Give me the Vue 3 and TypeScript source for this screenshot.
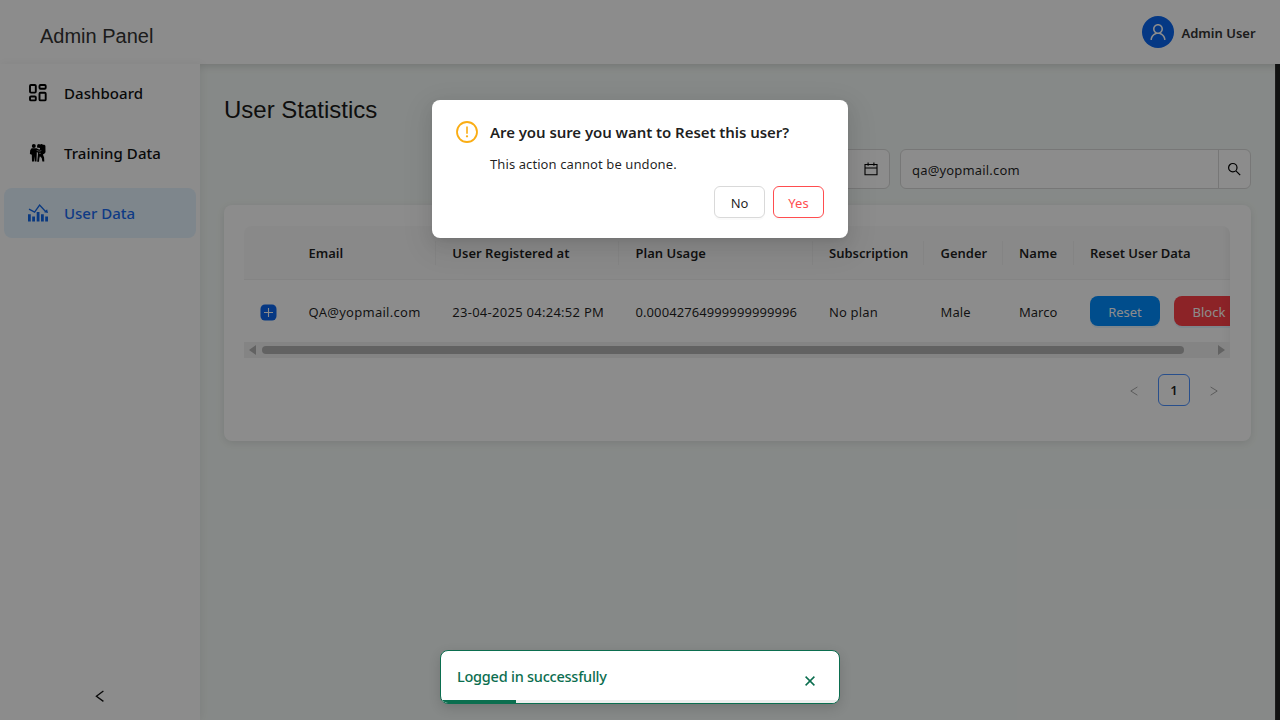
<script setup lang="ts">
interface MenuItem { key: string; label: string }
interface Column { key: string; title: string }

const menu: MenuItem[] = [
  { key: 'dashboard', label: 'Dashboard' },
  { key: 'training', label: 'Training Data' },
  { key: 'users', label: 'User Data' },
]
const activeKey = 'users'

const columns: Column[] = [
  { key: 'email', title: 'Email' },
  { key: 'registered', title: 'User Registered at' },
  { key: 'usage', title: 'Plan Usage' },
  { key: 'plan', title: 'Subscription' },
  { key: 'gender', title: 'Gender' },
  { key: 'name', title: 'Name' },
]
const row: Record<string, string> = {
  email: 'QA@yopmail.com',
  registered: '23-04-2025 04:24:52 PM',
  usage: '0.00042764999999999996',
  plan: 'No plan',
  gender: 'Male',
  name: 'Marco',
}
</script>

<template>
  <div class="app">
    <header class="header">
      <div class="brand">Admin Panel</div>
      <div class="account">
        <span class="avatar">
          <svg viewBox="64 64 896 896" width="18" height="18" fill="currentColor"><path d="M858.5 763.6a374 374 0 00-80.6-119.5 375.63 375.63 0 00-119.5-80.6c-.4-.2-.8-.3-1.2-.5C719.5 518 760 444.7 760 362c0-137-111-248-248-248S264 225 264 362c0 82.7 40.5 156 102.8 201.1-.4.2-.8.3-1.2.5-44.8 18.9-85 46-119.5 80.6a375.63 375.63 0 00-80.6 119.5A371.7 371.7 0 00136 901.8a8 8 0 008 8.2h60c4.4 0 7.9-3.5 8-7.8 2-77.2 33-149.5 87.8-204.3 56.7-56.7 132-87.9 212.2-87.9s155.5 31.2 212.2 87.9C779 752.7 810 825 812 902.2c.1 4.4 3.6 7.8 8 7.8h60a8 8 0 008-8.2c-1-47.8-10.9-94.3-29.5-138.2zM512 534c-45.9 0-89.1-17.9-121.6-50.4S340 407.9 340 362c0-45.9 17.9-89.1 50.4-121.6S466.1 190 512 190s89.1 17.9 121.6 50.4S684 316.1 684 362c0 45.9-17.9 89.1-50.4 121.6S557.9 534 512 534z" /></svg>
        </span>
        <span class="account-name">Admin User</span>
      </div>
    </header>

    <div class="body">
      <aside class="sider">
        <nav class="menu">
          <a v-for="item in menu" :key="item.key" class="menu-item" :class="[{ active: item.key === activeKey }, item.key]">
            <svg v-if="item.key === 'dashboard'" class="menu-icon" viewBox="0 0 20 20" fill="none" stroke="currentColor" stroke-width="1.9">
              <rect x="2" y="2" width="5.8" height="7.6" rx="1" /><rect x="11.5" y="2" width="6.2" height="3.8" rx="1" />
              <rect x="2" y="13.5" width="5.8" height="3.9" rx="1" /><rect x="11.5" y="9.8" width="6.2" height="7.6" rx="1" />
            </svg>
            <svg v-else-if="item.key === 'training'" class="menu-icon" viewBox="0 0 20 20" fill="currentColor">
              <circle cx="5.8" cy="3.1" r="2" />
              <path d="M3.6 5.3h5l1.8 1 1.6.2V5L9 4.4l.3-2.6 1.5-.9 1.3.6 1.5-.5 1.5.8 1.3-.1 1 1 .1 6.5-1.2 1.5-1.4.9 1.2 3 .2 4h-1.9l-.7-3.5-1.8-1.9-.6 2.3-.3 3.2H9.2l.7-6.8.1-2.2-1.2-.8-.3 9.7H6.7l-.3-5.4-.5 5.4H4l-.2-6.8-1.9-.7.3-3.8z" />
              <path d="M8.6 7.4l2.6.8 2.1-.6M10.9 10.3h2" stroke="#aaa" stroke-width=".8" fill="none" />
            </svg>
            <svg v-else class="menu-icon" viewBox="0 0 20 20" fill="currentColor">
              <path d="M0 11.2h2.8v7.2H0zM4.2 13.6H7v4.8H4.2zM8.7 9h2.8v9.4H8.7zM13 11.2h2.8v7.2H13zM17.2 13.6H20v4.8h-2.8z" />
              <path d="M1 6.2l5.6 2.9 5-7 6.2 6.6" fill="none" stroke="currentColor" stroke-width="1.3" /><path d="M20 10l-3.9-.7 3-3z" />
            </svg>
            <span>{{ item.label }}</span>
          </a>
        </nav>
        <div class="trigger">
          <svg width="12" height="14" viewBox="0 0 12 14" fill="none" stroke="#111" stroke-width="1.3"><path d="M9.4 2.1L2.4 7.3l7 5.1" /></svg>
        </div>
      </aside>

      <main class="content">
        <h1 class="title">User Statistics</h1>
        <div class="filters">
          <div class="range">
            <svg width="14" height="14" viewBox="0 0 14 14" fill="none" stroke="#000" stroke-width="1.1"><path d="M1 2.5h12v10.3H1zM1 6h12M4.1.6v3.2M9.9.6v3.2" /></svg>
          </div>
          <div class="search">
            <div class="search-input">qa@yopmail.com</div>
            <div class="search-btn">
              <svg width="14" height="14" viewBox="0 0 14 14" fill="none" stroke="#000" stroke-width="1.2"><circle cx="5.8" cy="5.7" r="4.2" /><path d="M8.9 8.8l4.3 4.3" /></svg>
            </div>
          </div>
        </div>

        <section class="card">
          <div class="table">
            <div class="tr thead">
              <div class="td"></div>
              <div v-for="c in columns" :key="c.key" class="td th">{{ c.title }}</div>
              <div class="td th last">Reset User Data</div>
            </div>
            <div class="tr tbody">
              <div class="td expand">
                <svg width="17" height="17" viewBox="0 0 17 17"><rect x=".5" y=".5" width="16" height="16" rx="4.5" fill="#0b66ee" /><path d="M8.5 4v9M4 8.5h9" stroke="#fff" stroke-width="1.1" /></svg>
              </div>
              <div v-for="c in columns" :key="c.key" class="td" :class="c.key">{{ row[c.key] }}</div>
              <div class="td actions">
                <button class="act reset">Reset</button>
                <button class="act block">Block</button>
              </div>
            </div>
            <div class="scroll">
              <i class="arrow left"></i><i class="thumb"></i><i class="arrow right"></i>
            </div>
            <div class="ping"></div>
          </div>
          <div class="pager">
            <span class="page-nav"><svg width="10" height="12" viewBox="0 0 10 12" fill="none" stroke="#a8a8a8" stroke-width="1"><path d="M8.4 2L1.8 6l6.6 4.2" /></svg></span>
            <span class="page">1</span>
            <span class="page-nav"><svg width="10" height="12" viewBox="0 0 10 12" fill="none" stroke="#a8a8a8" stroke-width="1"><path d="M1.6 2l6.6 4-6.6 4.2" /></svg></span>
          </div>
        </section>
      </main>
      <div class="edge"></div>
    </div>

    <div class="mask"></div>

    <div class="modal">
      <svg class="warn" width="22" height="22" viewBox="0 0 22 22"><circle cx="11" cy="11" r="10" fill="none" stroke="#faad14" stroke-width="1.8" /><path d="M10.2 5.5h1.6v7.2h-1.6z" fill="#faad14" /><circle cx="11" cy="15.3" r="1.15" fill="#faad14" /></svg>
      <div class="modal-main">
        <div class="modal-title">Are you sure you want to Reset this user?</div>
        <div class="modal-text">This action cannot be undone.</div>
        <div class="modal-actions">
          <button class="btn">No</button>
          <button class="btn danger">Yes</button>
        </div>
      </div>
    </div>

    <div class="toast">
      <span class="toast-text">Logged in successfully</span>
      <svg class="toast-close" width="10" height="10" viewBox="0 0 10 10" fill="none" stroke="#0b6e4f" stroke-width="1.5"><path d="M.6.6l8.8 8.8M9.4.6L.6 9.4" /></svg>
      <div class="progress"><i></i></div>
    </div>
  </div>
</template>

<style>
html, body { margin: 0; overflow: hidden; }
</style>

<style scoped>
* { box-sizing: border-box; }
.app { position: relative; width: 1280px; height: 720px; overflow: hidden; display: flex; flex-direction: column; background: #fff; font-family: "Noto Sans", "Open Sans", sans-serif; font-size: 13px; color: rgba(0, 0, 0, .88); }
svg { display: block; flex: none; }
button { font: inherit; margin: 0; }
.header { height: 64px; flex: none; display: flex; align-items: center; justify-content: space-between; padding: 0 23.5px 0 40px; background: #fff; box-shadow: 0 2px 8px rgba(0, 0, 0, .15); position: relative; }
.brand { font: 20px/24px "Liberation Sans", Arial, sans-serif; color: #333; padding-top: 8px; }
.account { display: flex; align-items: center; gap: 8px; }
.avatar { width: 32px; height: 32px; border-radius: 50%; background: #0a66f0; color: #fff; display: grid; place-items: center; }
.account-name { font-weight: 600; font-size: 13px; color: #333; width: 75px; white-space: nowrap; padding-top: 2px; }
.body { flex: 1; display: flex; min-height: 0; }
.sider { width: 200px; background: #fff; display: flex; flex-direction: column; justify-content: space-between; position: relative; box-shadow: 2px 0 8px rgba(0, 0, 0, .06); }
.menu { padding: 4px; display: flex; flex-direction: column; gap: 10px; }
.menu-item { height: 50px; border-radius: 8px; display: flex; align-items: center; gap: 16px; padding-left: 24px; font-size: 15px; font-weight: 500; letter-spacing: .05px; color: #111; white-space: nowrap; }
.menu-icon { width: 20px; height: 20px; color: #000; }
.menu-item.active { background: #e6f4ff; color: #1b6cf2; letter-spacing: 0; }
.menu-item.active .menu-icon { color: #1268ea; }
.trigger { height: 48px; display: flex; align-items: center; justify-content: center; padding-right: 1px; }
.content { flex: 1; min-width: 0; background: #f5faf7; padding: 32px 24.5px 0 24px; }
.title { margin: 0; font: 400 24px/28px "Liberation Sans", Arial, sans-serif; color: #1a1a1a; }
.filters { margin-top: 25px; display: flex; justify-content: flex-end; gap: 10px; }
.range, .search { height: 40px; border: 1px solid #d9d9d9; border-radius: 6px; background: #fff; display: flex; align-items: center; }
.range { width: 300px; justify-content: flex-end; padding-right: 11.5px; }
.search { width: 350.5px; }
.search-input { flex: 1; padding: 2px 0 0 11px; letter-spacing: .17px; }
.search-btn { width: 32px; height: 38px; border-left: 1px solid #d9d9d9; display: grid; place-items: center; }
.card { margin-top: 16px; height: 236px; border-radius: 8px; background: #fff; padding: 21px 20.5px 20px 20px; box-shadow: 0 2px 8px rgba(0, 0, 0, .1); }
.table { position: relative; width: 986px; overflow: hidden; border-radius: 8px 8px 0 0; }
.tr { display: grid; grid-template-columns: 48.5px 143.8px 183.2px 193.5px 111.5px 78.5px 71px 240px; width: 1070px; align-items: center; }
.thead { height: 54px; background: #fafafa; border-bottom: 1px solid #f0f0f0; font-weight: 600; }
.tbody { height: 62px; }
.td { padding-left: 16px; white-space: nowrap; }
.th { height: 24px; line-height: 24px; border-right: 1px solid #f0f0f0; }
.th.last { border: 0; letter-spacing: -.05px; }
.tbody .td { padding-top: 1px; }
.tbody .expand { padding-top: 3px; }
.tbody .actions { padding-top: 0; margin-top: -1px; }
.email, .registered { letter-spacing: .27px; }
.usage { letter-spacing: .09px; }
.plan, .gender { letter-spacing: .15px; }
.actions { display: flex; gap: 14px; }
.act { width: 70px; height: 30px; border: 0; border-radius: 8px; color: #fff; padding: 2px 0 0; box-shadow: 0 2px 0 rgba(5, 145, 255, .1); }
.reset { background: #008cff; }
.block { background: #ff4048; }
.scroll { height: 16px; background: #f1f1f1; display: flex; align-items: center; padding: 0 4px; }
.arrow { border: 5px solid transparent; border-width: 5px 7px; }
.arrow.left { border-left: 0; border-right-color: #b2b2b2; margin: 0 6px 0 1px; }
.arrow.right { border-right: 0; border-left-color: #b2b2b2; margin-left: 34px; }
.thumb { width: 922px; height: 8px; border-radius: 4px; background: #b3b3b3; }
.ping { position: absolute; right: 0; top: 0; width: 10px; height: 116px; box-shadow: inset -10px 0 8px -8px rgba(5, 5, 5, .06); }
.pager { display: flex; justify-content: flex-end; gap: 8px; margin-top: 15.5px; }
.page, .page-nav { width: 32px; height: 32px; display: grid; place-items: center; padding-top: 2px; }
.page { border: 1px solid #4a90ff; border-radius: 6px; font-weight: 600; padding-top: 0; }
.edge { width: 5px; background: #202221; border-left: 1px solid #333; }
.mask { position: absolute; inset: 0; background: rgba(0, 0, 0, .45); }
.modal { position: absolute; left: 432px; top: 100px; width: 416px; height: 138px; background: #fff; border-radius: 8px; padding: 20px 24px; display: flex; gap: 12px; box-shadow: 0 6px 16px rgba(0, 0, 0, .08), 0 3px 6px -4px rgba(0, 0, 0, .12), 0 9px 28px 8px rgba(0, 0, 0, .05); }
.warn { margin-top: 1px; }
.modal-main { flex: 1; }
.modal-title { font-size: 15px; font-weight: 600; line-height: 24px; letter-spacing: -.065px; white-space: nowrap; }
.modal-text { line-height: 22px; margin-top: 9px; letter-spacing: .09px; }
.modal-actions { display: flex; justify-content: flex-end; gap: 8px; margin-top: 11px; }
.btn { width: 51px; height: 32px; border: 1px solid #d9d9d9; border-radius: 6px; background: #fff; padding: 2px 0 0; box-shadow: 0 2px 0 rgba(0, 0, 0, .02); color: rgba(0, 0, 0, .88); }
.btn.danger { border-color: #ff4d4f; color: #ff4d4f; }
.toast { position: absolute; left: 440px; top: 650px; width: 400px; height: 54px; background: #fff; border: 1px solid #0b6e4f; border-radius: 8px; overflow: hidden; display: flex; justify-content: space-between; padding: 0 24px 0 16px; box-shadow: 0 4px 12px rgba(0, 0, 0, .15); }
.toast-text { color: #0b6e4f; font-size: 14.5px; font-weight: 500; letter-spacing: -.24px; line-height: 50px; white-space: nowrap; }
.toast-close { margin-top: 25px; }
.progress { position: absolute; left: 0; right: 0; bottom: 0; height: 3px; background: #eee; display: flex; }
.progress i { width: 75px; background: #0b6e4f; }
</style>
